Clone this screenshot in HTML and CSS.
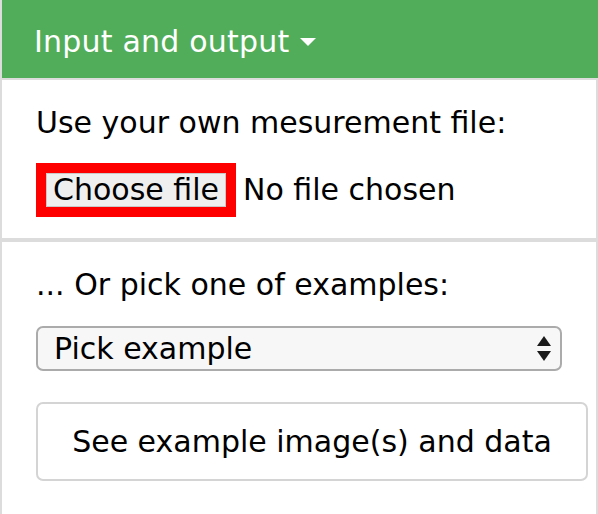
FILE: index.html
```html
<!DOCTYPE html>
<html lang="en">
<head>
<meta charset="utf-8">
<title>Input and output</title>
<link rel="stylesheet" href="styles.css">
</head>
<body>
<div class="panel">
  <div class="panel-heading">
    <span class="title">Input and output</span>
    <span class="caret"></span>
  </div>
  <div class="section">
    <p class="label">Use your own mesurement file:</p>
    <div class="file-row">
      <span class="highlight"><span class="file-btn">Choose file</span></span>
      <span class="file-status">No file chosen</span>
    </div>
  </div>
  <div class="section section-sep">
    <p class="label">... Or pick one of examples:</p>
    <div class="select">
      <span>Pick example</span>
      <svg class="arrows" width="14" height="26" viewBox="0 0 14 26" aria-hidden="true">
        <polygon points="7,0 14,10 0,10" fill="#1a1a1a"/>
        <polygon points="0,15 14,15 7,25" fill="#1a1a1a"/>
      </svg>
    </div>
    <div class="btn">See example image(s) and data</div>
  </div>
</div>
</body>
</html>
```
FILE: styles.css
```css
* { box-sizing: border-box; }
html, body { margin: 0; padding: 0; background: #fff; }
body {
  font-family: "DejaVu Sans", Verdana, sans-serif;
  font-size: 30px;
  line-height: 36px;
  color: #000;
}
.panel {
  min-height: 514px;
  border-left: 2px solid #dcdcdc;
  border-right: 2px solid #dcdcdc;
}
.panel-heading {
  height: 80px;
  background: #51ad59;
  border-bottom: 2px solid #dcdcdc;
  margin-right: -2px;
  color: #fff;
  display: flex;
  align-items: center;
  padding: 5px 0 0 32px;
}
.title { letter-spacing: 0.2px; }
.caret {
  display: inline-block;
  width: 0;
  height: 0;
  border-left: 8px solid transparent;
  border-right: 8px solid transparent;
  border-top: 8px solid #fff;
  margin-left: 11px;
}
.section {
  padding: 25px 8px 21px 34px;
}
.section-sep {
  border-top: 4px solid #dcdcdc;
}
.label { margin: 0; }
.file-row {
  margin-top: 22px;
  display: flex;
  align-items: center;
}
.highlight {
  display: inline-block;
  border: 10px solid #ff0000;
}
.file-btn {
  display: block;
  height: 34px;
  line-height: 32px;
  padding: 0 6px 0 6px;
  background: #efefef;
  border: 1px solid #c9c9c9;
}
.file-status { margin-left: 7px; }
.select {
  margin-top: 23px;
  width: 526px;
  height: 45px;
  border: 2px solid #ababab;
  border-radius: 7px;
  background: #f7f7f7;
  display: flex;
  align-items: center;
  justify-content: space-between;
  padding: 0 9px 0 16px;
}
.arrows { display: block; }
.btn {
  margin-top: 31px;
  width: 552px;
  height: 79px;
  border: 2px solid #d4d4d4;
  border-radius: 7px;
  display: flex;
  align-items: center;
  justify-content: center;
}
```
